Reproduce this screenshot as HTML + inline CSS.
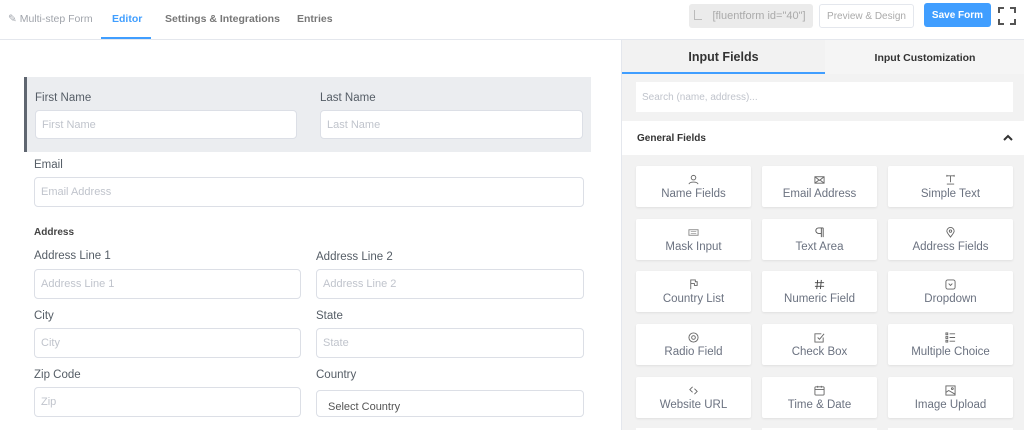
<!DOCTYPE html>
<html><head><style>
*{box-sizing:border-box;margin:0;padding:0}
html,body{width:1024px;height:430px;overflow:hidden}
body{background:#fff;font-family:"Liberation Sans",sans-serif;position:relative;color:#606266}
.a{position:absolute}
.lab{position:absolute;font-size:11.5px;color:#555d66}
.inp{position:absolute;background:#fff;border:1px solid #dcdfe6;border-radius:4px;font-size:11px;color:#c0c4cc;padding-left:6px;display:flex;align-items:center}
.card{position:absolute;width:115px;height:41px;background:#fff;box-shadow:0 1px 2px rgba(0,0,0,.08);border-radius:2px;text-align:center;font-size:11.5px;color:#6b7280}
.card svg{display:block;margin:8px auto 3px;width:11px;height:11px}
.btn{display:flex;align-items:center;justify-content:center}
</style></head><body>
<div class="a" style="left:0;top:39px;width:1024px;height:1px;background:#e4e7ed"></div>
<div class="a" style="left:8px;top:13px;font-size:10.5px;color:#a0a4ab">✎ Multi-step Form</div>
<div class="a" style="left:112px;top:13px;font-size:10.5px;color:#409eff;font-weight:bold">Editor</div>
<div class="a" style="left:101px;top:37px;width:50px;height:2px;background:#409eff"></div>
<div class="a" style="left:165px;top:13px;font-size:10.5px;color:#777;font-weight:bold">Settings &amp; Integrations</div>
<div class="a" style="left:297px;top:13px;font-size:10.5px;color:#777;font-weight:bold">Entries</div>
<div class="a btn" style="left:689px;top:4px;width:124px;height:24px;background:#ebebeb;border-radius:3px;font-size:11px;color:#aaa;padding-left:16px">[fluentform id="40"]</div>
<div class="a" style="left:694px;top:10px;width:8px;height:10px;border-left:1px solid #bbb;border-bottom:1px solid #bbb"></div>
<div class="a btn" style="left:819px;top:4px;width:95px;height:24px;border:1px solid #e4e7ed;border-radius:3px;font-size:10px;color:#aaa">Preview &amp; Design</div>
<div class="a btn" style="left:924px;top:3px;width:67px;height:24px;background:#409eff;border-radius:3px;font-size:10px;color:#fff;font-weight:bold">Save Form</div>
<svg class="a" style="left:998px;top:7px" width="18" height="18" viewBox="0 0 18 18" fill="none" stroke="#555" stroke-width="2"><path d="M1 6V1h5M12 1h5v5M17 12v5h-5M6 17H1v-5"/></svg>
<div class="a" style="left:24px;top:77px;width:567px;height:75px;background:#ebedf0;border-left:3px solid #5f6670"></div>
<div class="lab" style="left:35px;top:92px">First Name</div>
<div class="inp" style="left:35px;top:110px;width:262px;height:29px">First Name</div>
<div class="lab" style="left:320px;top:92px">Last Name</div>
<div class="inp" style="left:320px;top:110px;width:263px;height:29px">Last Name</div>
<div class="lab" style="left:34px;top:159px">Email</div>
<div class="inp" style="left:34px;top:177px;width:550px;height:30px">Email Address</div>
<div class="lab" style="left:34px;top:227px;font-size:10px;font-weight:bold;color:#444">Address</div>
<div class="lab" style="left:34px;top:250px">Address Line 1</div>
<div class="inp" style="left:34px;top:269px;width:267px;height:30px">Address Line 1</div>
<div class="lab" style="left:316px;top:251px">Address Line 2</div>
<div class="inp" style="left:316px;top:269px;width:268px;height:30px">Address Line 2</div>
<div class="lab" style="left:34px;top:310px">City</div>
<div class="inp" style="left:34px;top:328px;width:267px;height:30px">City</div>
<div class="lab" style="left:316px;top:310px">State</div>
<div class="inp" style="left:316px;top:328px;width:268px;height:30px">State</div>
<div class="lab" style="left:34px;top:369px">Zip Code</div>
<div class="inp" style="left:34px;top:387px;width:267px;height:30px">Zip</div>
<div class="lab" style="left:316px;top:369px">Country</div>
<div class="inp" style="left:316px;top:390px;width:268px;height:27px;color:#555;padding-left:11px;padding-top:6px">Select Country</div>
<div class="a" style="left:621px;top:40px;width:403px;height:390px;background:#f2f2f2;border-left:1px solid #e4e7ed;overflow:hidden">
<div class="a" style="left:0;top:0;width:203px;height:34px;font-size:12.5px;font-weight:bold;color:#333;text-align:center;line-height:34px">Input Fields</div>
<div class="a" style="left:0;top:32px;width:203px;height:2px;background:#409eff"></div>
<div class="a" style="left:203px;top:0;width:200px;height:34px;font-size:10.5px;font-weight:bold;color:#333;text-align:center;line-height:36px;background:#f5f5f5">Input Customization</div>
<div class="a" style="left:14px;top:42px;width:377px;height:30px;background:#fff;font-size:10px;color:#c0c4cc;padding:10px 0 0 6px">Search (name, address)...</div>
<div class="a" style="left:0;top:81px;width:402px;height:34px;background:#fff;font-size:10px;font-weight:bold;color:#333;padding:12px 0 0 15px">General Fields</div>
<svg class="a" style="left:381px;top:94px" width="10" height="7" viewBox="0 0 10 7"><path d="M1 6L5 2L9 6" stroke="#333" stroke-width="2" fill="none"/></svg>

<div class="card" style="left:14px;top:126px"><svg viewBox="0 0 12 12" fill="none" stroke="#666"><circle cx="6" cy="4" r="2.5"/><path d="M1 11c1-3 9-3 10 0"/></svg>Name Fields</div>
<div class="card" style="left:140px;top:126px"><svg viewBox="0 0 12 12" fill="none" stroke="#666"><rect x="1" y="3" width="10" height="7"/><path d="M1 3l5 4 5-4M1 10l4-3M11 10l-4-3"/></svg>Email Address</div>
<div class="card" style="left:266px;top:126px;width:125px"><svg viewBox="0 0 12 12" fill="none" stroke="#666"><path d="M2 2h8M6 2v7M2 1v2M10 1v2M2 11h8"/></svg>Simple Text</div>

<div class="card" style="left:14px;top:179px"><svg viewBox="0 0 12 12" fill="none" stroke="#888"><rect x="1" y="3" width="10" height="6"/><path d="M3 5h6M3 7h6" stroke-width=".6"/></svg>Mask Input</div>
<div class="card" style="left:140px;top:179px"><svg viewBox="0 0 12 12" fill="none" stroke="#555"><path d="M8 1v10M10 1v10M10 1H5a3 3 0 000 6h3"/></svg>Text Area</div>
<div class="card" style="left:266px;top:179px;width:125px"><svg viewBox="0 0 12 12" fill="none" stroke="#666"><path d="M6 11C3 7 2 6 2 4.5a4 4 0 018 0C10 6 9 7 6 11z"/><circle cx="6" cy="4.5" r="1.3"/></svg>Address Fields</div>

<div class="card" style="left:14px;top:231px"><svg viewBox="0 0 12 12" fill="none" stroke="#666"><path d="M3 11V1h5v2h2v4H7V5H3"/></svg>Country List</div>
<div class="card" style="left:140px;top:231px"><svg viewBox="0 0 12 12" fill="none" stroke="#444"><path d="M4 1l-1 10M8 1l-1 10M1 4h10M1 8h10"/></svg>Numeric Field</div>
<div class="card" style="left:266px;top:231px;width:125px"><svg viewBox="0 0 12 12" fill="none" stroke="#666"><rect x="1" y="1" width="10" height="10" rx="2"/><path d="M4 5l2 2 2-2"/></svg>Dropdown</div>

<div class="card" style="left:14px;top:284px"><svg viewBox="0 0 12 12" fill="none" stroke="#666"><circle cx="6" cy="6" r="5"/><circle cx="6" cy="6" r="2"/></svg>Radio Field</div>
<div class="card" style="left:140px;top:284px"><svg viewBox="0 0 12 12" fill="none" stroke="#666"><path d="M10 6v5H1V2h7"/><path d="M4 6l2 2 5-6"/></svg>Check Box</div>
<div class="card" style="left:266px;top:284px;width:125px"><svg viewBox="0 0 12 12" fill="none" stroke="#666"><rect x="1" y="1" width="2" height="2"/><rect x="1" y="5" width="2" height="2"/><rect x="1" y="9" width="2" height="2"/><path d="M5 2h6M5 6h6M5 10h6"/></svg>Multiple Choice</div>

<div class="card" style="left:14px;top:337px"><svg viewBox="0 0 12 12" fill="none" stroke="#666"><path d="M5 2L2 5l3 3M7 4l3 3-3 3"/></svg>Website URL</div>
<div class="card" style="left:140px;top:337px"><svg viewBox="0 0 12 12" fill="none" stroke="#666"><rect x="1" y="2" width="10" height="9" rx="1"/><path d="M1 5h10M4 1v2M8 1v2"/></svg>Time &amp; Date</div>
<div class="card" style="left:266px;top:337px;width:125px"><svg viewBox="0 0 12 12" fill="none" stroke="#666"><rect x="1" y="1" width="10" height="10"/><path d="M1 8l3-2 7 4"/><circle cx="8" cy="4" r="1"/></svg>Image Upload</div>

<div class="a" style="left:14px;top:388px;width:115px;height:2px;background:#fff"></div>
<div class="a" style="left:140px;top:388px;width:115px;height:2px;background:#fff"></div>
<div class="a" style="left:266px;top:388px;width:125px;height:2px;background:#fff"></div>
</div>
</body></html>
